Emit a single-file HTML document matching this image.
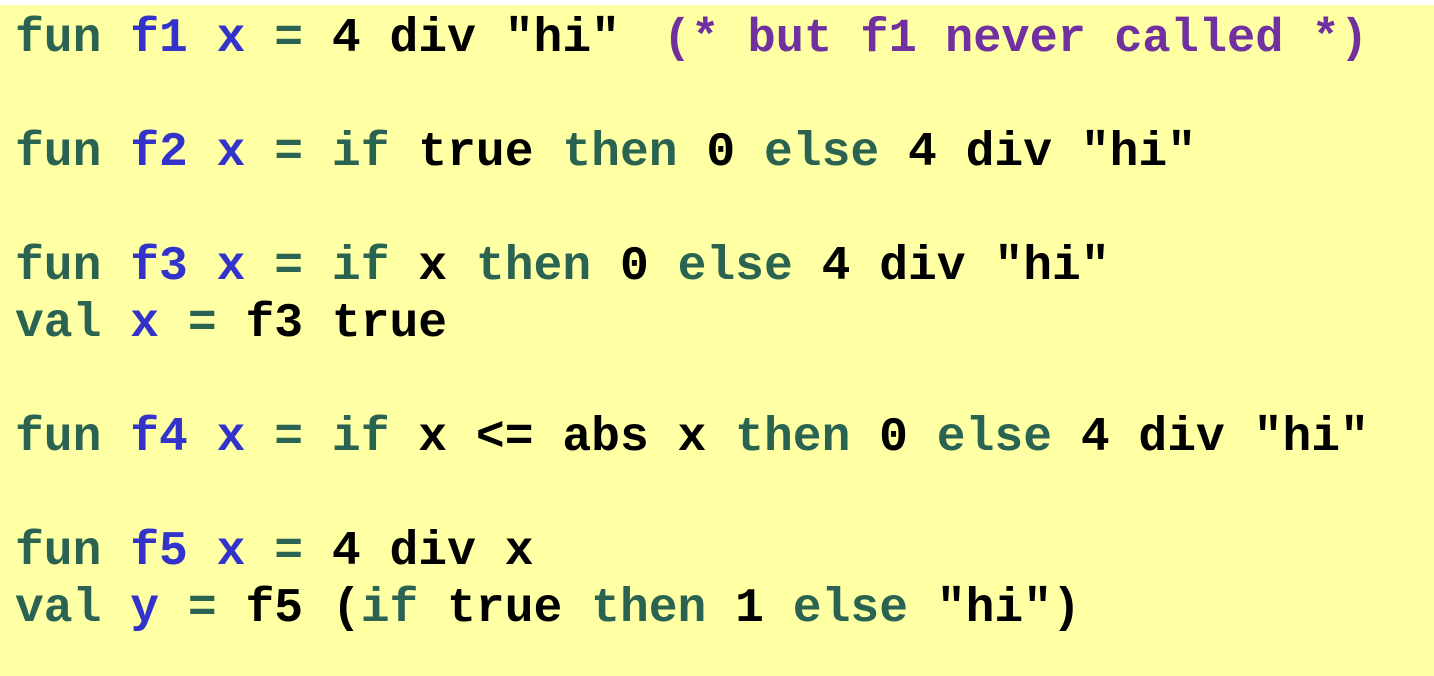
<!DOCTYPE html>
<html><head><style>
html,body{margin:0;padding:0;background:#fff;}
.b{position:absolute;top:5px;left:0;width:1434px;height:671px;background:#ffffa3;}
pre{position:absolute;left:15px;top:11px;margin:0;font-family:"Liberation Mono",monospace;font-weight:bold;font-size:48px;line-height:57px;color:#000;}
.g{color:#2a6352}.u{color:#3333cc}.p{color:#7030a0}
.c{font-size:47px;margin-left:43px}
</style></head><body><div class="b"></div>
<pre><span class="g">fun</span> <span class="u">f1 x</span> <span class="g">=</span> 4 div "hi"<span class="p c">(* but f1 never called *)</span>

<span class="g">fun</span> <span class="u">f2 x</span> <span class="g">=</span> <span class="g">if</span> true <span class="g">then</span> 0 <span class="g">else</span> 4 div "hi"

<span class="g">fun</span> <span class="u">f3 x</span> <span class="g">=</span> <span class="g">if</span> x <span class="g">then</span> 0 <span class="g">else</span> 4 div "hi"
<span class="g">val</span> <span class="u">x</span> <span class="g">=</span> f3 true

<span class="g">fun</span> <span class="u">f4 x</span> <span class="g">=</span> <span class="g">if</span> x &lt;= abs x <span class="g">then</span> 0 <span class="g">else</span> 4 div "hi"

<span class="g">fun</span> <span class="u">f5 x</span> <span class="g">=</span> 4 div x
<span class="g">val</span> <span class="u">y</span> <span class="g">=</span> f5 (<span class="g">if</span> true <span class="g">then</span> 1 <span class="g">else</span> "hi")</pre>
</body></html>
